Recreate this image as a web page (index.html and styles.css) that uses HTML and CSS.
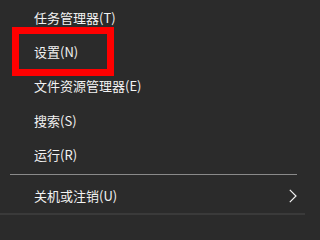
FILE: index.html
```html
<!DOCTYPE html>
<html lang="zh-CN">
<head>
<meta charset="utf-8">
<title>菜单</title>
<link rel="stylesheet" href="styles.css">
</head>
<body>
<div class="menu">
  <div class="item">任务管理器(T)</div>
  <div class="item">设置(N)</div>
  <div class="item">文件资源管理器(E)</div>
  <div class="item">搜索(S)</div>
  <div class="item">运行(R)</div>
  <div class="sep"><div class="line"></div></div>
  <div class="item has-sub">
    <span>关机或注销(U)</span>
    <svg class="chev" width="8" height="14" viewBox="0 0 8 14"><polyline points="0.8,0.8 7,7 0.8,13.2" fill="none" stroke="#f2f2f2" stroke-width="1.2"/></svg>
  </div>
  <div class="highlight"></div>
</div>
</body>
</html>
```
FILE: styles.css
```css
html, body {
  margin: 0;
  padding: 0;
  background: #2b2b2b;
}
.menu {
  position: relative;
  width: 305px;
  height: 215px;
  background: #2b2b2b;
  border-bottom: 2px solid #3a3a3a;
  box-sizing: border-box;
  font-family: "Noto Sans CJK SC", "Noto Sans", sans-serif;
  font-size: 13px;
  color: #f2f2f2;
}
.item {
  height: 34.3px;
  display: flex;
  align-items: center;
  padding-left: 34px;
  padding-right: 8px;
  box-sizing: border-box;
}
.has-sub {
  height: 34px;
  justify-content: space-between;
}
.sep {
  height: 7.5px;
  padding: 2.5px 8px 0 10px;
  box-sizing: border-box;
}
.line {
  height: 1px;
  background: #8a8a8a;
}
.chev {
  display: block;
}
.highlight {
  position: absolute;
  left: 12px;
  top: 27px;
  width: 102px;
  height: 49px;
  border: 7px solid #ff0000;
  box-sizing: border-box;
}
```
